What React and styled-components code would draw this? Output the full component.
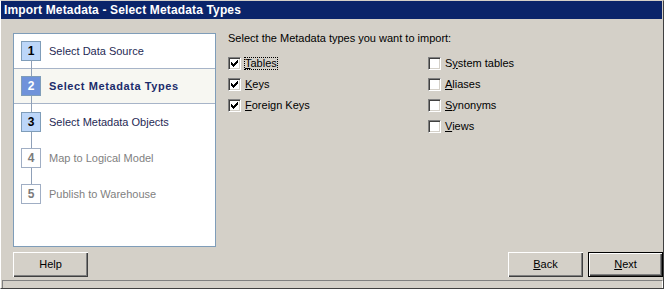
import React from "react";
import styled, { createGlobalStyle } from "styled-components";

const GlobalStyle = createGlobalStyle`
  html, body {
    margin: 0;
    padding: 0;
    background: #d4d0c8;
  }
  * {
    box-sizing: border-box;
  }
`;

const Window = styled.div`
  width: 664px;
  height: 289px;
  display: flex;
  flex-direction: column;
  background: #d4d0c8;
  border-top: 1px solid #d4d0c8;
  border-left: 1px solid #ffffff;
  border-right: 1px solid #404040;
  border-bottom: 1px solid #404040;
  font-family: "Liberation Sans", Arial, sans-serif;
  font-size: 11px;
  color: #000;
  overflow: hidden;
`;

const TitleBar = styled.div`
  height: 18px;
  margin-right: 1px;
  flex: none;
  background: #0a246a;
  color: #fff;
  font-weight: bold;
  font-size: 12px;
  letter-spacing: 0.15px;
  line-height: 18px;
  padding-left: 3px;
  white-space: nowrap;
`;

const Body = styled.div`
  flex: 1;
  display: flex;
  flex-direction: column;
  padding-top: 14px;
`;

const Main = styled.div`
  display: flex;
  padding-left: 12px;
  gap: 12px;
`;

const StepsPanel = styled.div`
  width: 203px;
  height: 214px;
  flex: none;
  background: #fff;
  border: 1px solid #7f9db9;
  display: flex;
  flex-direction: column;
`;

const StepRow = styled.div`
  height: ${(p) => (p.$divided ? 35 : 36)}px;
  display: flex;
  align-items: center;
  padding-left: 7px;
  gap: 8px;
  background: ${(p) => (p.$active ? "#f7f7f2" : "transparent")};
  border-bottom: ${(p) => (p.$divided ? "1px solid #a7b4c8" : "none")};
`;

const boxFill = {
  done: "#bcd6f9",
  active: "#6f92da",
  todo: "#ffffff",
};

const NumBox = styled.div`
  position: relative;
  width: 20px;
  height: 20px;
  flex: none;
  border: 1px solid ${(p) => (p.$state === "todo" ? "#a0aec4" : "#7f9db9")};
  background: ${(p) => boxFill[p.$state]};
  color: ${(p) =>
    p.$state === "active" ? "#fff" : p.$state === "todo" ? "#7b7b7b" : "#000"};
  font-weight: bold;
  font-size: 12px;
  line-height: 18px;
  text-align: center;

  &::before {
    content: "";
    display: ${(p) => (p.$first ? "none" : "block")};
    position: absolute;
    left: 9px;
    top: -17px;
    width: 1px;
    height: 16px;
    background: #8fa0b8;
  }
`;

const StepLabel = styled.span`
  white-space: nowrap;
  color: ${(p) =>
    p.$state === "active" ? "#1b2c6b" : p.$state === "todo" ? "#7f7f7f" : "#1f2a55"};
  font-weight: ${(p) => (p.$state === "active" ? "bold" : "normal")};
  letter-spacing: ${(p) => (p.$state === "active" ? "0.6px" : "0")};
`;

const Content = styled.div`
  flex: 1;
  display: flex;
  flex-direction: column;
`;

const Heading = styled.div`
  margin-top: -1px;
  line-height: 13px;
  height: 13px;
  margin-bottom: 8px;
  white-space: nowrap;
`;

const Columns = styled.div`
  display: flex;
`;

const Column = styled.div`
  width: 200px;
  display: flex;
  flex-direction: column;
`;

const CheckRow = styled.div`
  height: 21px;
  display: flex;
  align-items: center;
`;

const Box = styled.span`
  width: 13px;
  height: 13px;
  flex: none;
  display: flex;
  align-items: center;
  justify-content: center;
  background: #fff;
  border-top: 1px solid #808080;
  border-left: 1px solid #808080;
  border-right: 1px solid #ffffff;
  border-bottom: 1px solid #ffffff;
  box-shadow: inset 1px 1px 0 #404040, inset -1px -1px 0 #d4d0c8;
`;

const CheckLabel = styled.span`
  margin-left: 3px;
  padding: 0 1px;
  line-height: 13px;
  height: 13px;
  white-space: nowrap;
  outline: ${(p) => (p.$focused ? "1px dotted #000" : "none")};
  outline-offset: -1px;
`;

const Mn = styled.u`
  text-decoration: underline;
  text-underline-offset: 1px;
`;

const Footer = styled.div`
  margin-top: 5px;
  height: 25px;
  display: flex;
  padding-left: 12px;
`;

const Spacer = styled.div`
  flex: 1;
`;

const Button = styled.div`
  width: ${(p) => (p.$default ? 75 : 75)}px;
  height: 25px;
  margin-left: ${(p) => (p.$default ? 5 : 0)}px;
  display: flex;
  align-items: center;
  justify-content: center;
  background: #d4d0c8;
  border: ${(p) => (p.$default ? "1px solid #000" : "none")};
  box-shadow: ${(p) =>
    p.$default
      ? "inset 1px 1px 0 #fff, inset -1px -1px 0 #404040, inset -2px -2px 0 #808080"
      : "inset 1px 1px 0 #fff, inset -1px -1px 0 #404040, inset -2px -2px 0 #808080"};
  line-height: 13px;
  color: #000;
`;

const StatusBar = styled.div`
  margin-top: 3px;
  margin-left: 1px;
  flex: 1;
  border-top: 1px solid #808080;
  border-left: 1px solid #808080;
  border-right: 1px solid #ffffff;
`;

const Check = () => (
  <svg width="7" height="7" viewBox="0 0 7 7" shapeRendering="crispEdges">
    <path
      fill="#000"
      d="M6 0h1v1h-1z M5 1h2v1h-2z M0 2h1v1h-1z M4 2h3v1h-3z M0 3h2v1h-2z M3 3h3v1h-3z M0 4h5v1h-5z M1 5h3v1h-3z M2 6h1v1h-1z"
    />
  </svg>
);

const steps = [
  { n: 1, label: "Select Data Source", state: "done" },
  { n: 2, label: "Select Metadata Types", state: "active" },
  { n: 3, label: "Select Metadata Objects", state: "done" },
  { n: 4, label: "Map to Logical Model", state: "todo" },
  { n: 5, label: "Publish to Warehouse", state: "todo" },
];

const leftTypes = [
  { pre: "", mn: "T", post: "ables", checked: true, focused: true },
  { pre: "", mn: "K", post: "eys", checked: true },
  { pre: "", mn: "F", post: "oreign Keys", checked: true },
];

const rightTypes = [
  { pre: "S", mn: "y", post: "stem tables" },
  { pre: "", mn: "A", post: "liases" },
  { pre: "", mn: "S", post: "ynonyms" },
  { pre: "", mn: "V", post: "iews" },
];

const TypeOption = ({ item }) => (
  <CheckRow>
    <Box>{item.checked ? <Check /> : null}</Box>
    <CheckLabel $focused={item.focused}>
      {item.pre}
      <Mn>{item.mn}</Mn>
      {item.post}
    </CheckLabel>
  </CheckRow>
);

export default function App() {
  return (
    <>
      <GlobalStyle />
      <Window>
        <TitleBar>Import Metadata - Select Metadata Types</TitleBar>
        <Body>
          <Main>
            <StepsPanel>
              {steps.map((s, i) => (
                <StepRow key={s.n} $active={s.state === "active"} $divided={i < 2}>
                  <NumBox $state={s.state} $first={i === 0}>
                    {s.n}
                  </NumBox>
                  <StepLabel $state={s.state}>{s.label}</StepLabel>
                </StepRow>
              ))}
            </StepsPanel>
            <Content>
              <Heading>Select the Metadata types you want to import:</Heading>
              <Columns>
                <Column>
                  {leftTypes.map((t) => (
                    <TypeOption key={t.mn + t.post} item={t} />
                  ))}
                </Column>
                <Column>
                  {rightTypes.map((t) => (
                    <TypeOption key={t.mn + t.post} item={t} />
                  ))}
                </Column>
              </Columns>
            </Content>
          </Main>
          <Footer>
            <Button>Help</Button>
            <Spacer />
            <Button>
              <span>
                <Mn>B</Mn>ack
              </span>
            </Button>
            <Button $default>
              <span>
                <Mn>N</Mn>ext
              </span>
            </Button>
          </Footer>
          <StatusBar />
        </Body>
      </Window>
    </>
  );
}
